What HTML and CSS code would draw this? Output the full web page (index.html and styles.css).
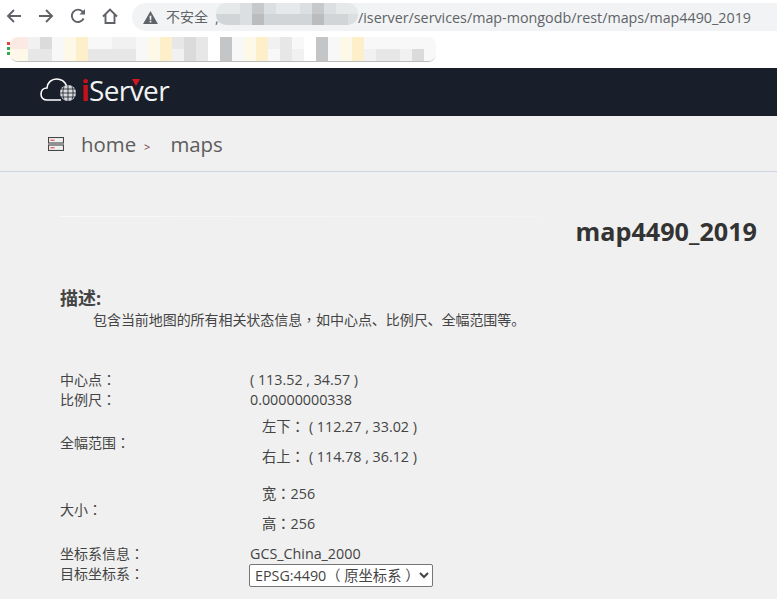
FILE: index.html
```html
<!DOCTYPE html>
<html lang="zh">
<head>
<meta charset="utf-8">
<title>map4490_2019</title>
<link rel="stylesheet" href="styles.css">
</head>
<body>
<div class="chrome">
  <div class="toolbar">
    <svg class="nav" viewBox="0 0 16 16"><path d="M15 8H2M8 2 2 8l6 6" /></svg>
    <svg class="nav" viewBox="0 0 16 16"><path d="M1 8h13M8 2l6 6-6 6" /></svg>
    <svg class="nav" viewBox="0 0 16 16"><path d="M13.6 10.5A6.2 6.2 0 1 1 12.6 3.6L14.5 5.4" /><path class="solid" d="M15 1v5.5H9.5z" /></svg>
    <svg class="nav" viewBox="0 0 16 16"><path d="M1 8.5 8 1.5l7 7M3.5 6.5V15h9V6.500" /></svg>
    <div class="url">
      <svg class="warn" viewBox="0 0 16 14"><path d="M8 0 16 14H0z" /><rect class="warnmark" x="7.100" y="5" width="1.800" height="4.500" /><rect class="warnmark" x="7.100" y="10.500" width="1.800" height="1.800" /></svg>
      <span class="insecure">不安全</span>
      <span class="sep">,</span>
      <div class="urlblur">
        <i class="u1"></i><i class="u1"></i><i class="u2"></i><i class="u4"></i><i class="u2"></i><i class="u1"></i><i class="u1"></i><i class="u2"></i><i class="u4"></i><i class="u2"></i><i class="u1"></i><i class="u1"></i>
        <i class="u3"></i><i class="u3"></i><i class="u2"></i><i class="u5"></i><i class="u3"></i><i class="u3"></i><i class="u3"></i><i class="u3"></i><i class="u5"></i><i class="u3"></i><i class="u3"></i><i class="u2"></i>
      </div>
      <span class="path">/iserver/services/map-mongodb/rest/maps/map4490_2019</span>
    </div>
  </div>
  <div class="bookmarks">
    <div class="dots"><i class="dot red"></i><i class="dot green"></i><i class="dot green"></i></div>
    <div class="blur">
      <i class="pi"></i><i class="pi"></i><i class="m2"></i><i class="m4"></i><i class="m1"></i><i class="m6"></i><i class="m7"></i><i class="m1"></i><i class="m1"></i><i class="m2"></i><i class="m2"></i><i class="m1"></i><i class="m6"></i><i class="m7"></i><i class="m3"></i><i class="m4"></i><i class="m3"></i><i class="m0"></i><i class="m5"></i><i class="m1"></i><i class="m6"></i><i class="m7"></i><i class="m2"></i><i class="m3"></i><i class="m1"></i><i class="m0"></i><i class="m5"></i><i class="m1"></i><i class="m6"></i><i class="m7"></i><i class="m1"></i><i class="m1"></i><i class="m1"></i><i class="m1"></i><i class="m1"></i><i class="m1"></i>
      <i class="m6"></i><i class="m6"></i><i class="m3"></i><i class="m3"></i><i class="m1"></i><i class="m6"></i><i class="m7"></i><i class="m3"></i><i class="m3"></i><i class="m3"></i><i class="m3"></i><i class="m1"></i><i class="m6"></i><i class="m7"></i><i class="m2"></i><i class="m4"></i><i class="m3"></i><i class="m0"></i><i class="m5"></i><i class="m1"></i><i class="m6"></i><i class="m7"></i><i class="m1"></i><i class="m3"></i><i class="m2"></i><i class="m0"></i><i class="m5"></i><i class="m1"></i><i class="m6"></i><i class="m7"></i><i class="m2"></i><i class="m3"></i><i class="m3"></i><i class="m2"></i><i class="m4"></i><i class="m1"></i>
    </div>
  </div>
</div>

<header class="brand">
  <svg class="cloud" viewBox="0 0 36 26">
    <path class="cloudline" d="M21 22H7C3.500 22 1 19.500 1 16C1 12.500 3.500 10 7 10C7.500 4.500 11.500 1 16.500 1C21.500 1 25 4 26.500 7.500" />
    <circle class="globe" cx="28" cy="15" r="8" />
    <path class="grid" d="M20 15h16M21 11h14M21 19h14M28 7v16M24 8.500c-1.500 4-1.500 9 0 13M32 8.500c1.500 4 1.500 9 0 13" />
  </svg>
  <div class="logotext"><span class="red-i">i</span>Server<b class="notch"></b></div>
</header>

<nav class="crumbs">
  <svg class="crumbicon" viewBox="0 0 16 14">
    <rect x="0.500" y="0.500" width="15" height="5.500" />
    <rect x="0.500" y="8" width="15" height="5.500" />
    <path d="M2.500 3.200h4M2.500 10.800h4" />
  </svg>
  <a class="crumb">home</a>
  <span class="gt">&gt;</span>
  <a class="crumb">maps</a>
</nav>

<main class="content">
  <div class="rule"></div>
  <h1 class="title">map4490_2019</h1>
  <h2 class="desc-head">描述:</h2>
  <p class="desc">包含当前地图的所有相关状态信息<span class="cp" lang="zh-Hant">，</span>如中心点、比例尺、全幅范围等。</p>
  <div class="props">
    <div class="label r1">中心点<span class="cp" lang="zh-Hant">：</span></div><div class="value r1">( 113.52 , 34.57 )</div>
    <div class="label r1">比例尺<span class="cp" lang="zh-Hant">：</span></div><div class="value r1">0.00000000338</div>
    <div class="label">全幅范围<span class="cp" lang="zh-Hant">：</span></div>
    <div class="value stack range"><div class="line">左下<span class="cp" lang="zh-Hant">：</span>( 112.27 , 33.02 )</div><div class="line">右上<span class="cp" lang="zh-Hant">：</span>( 114.78 , 36.12 )</div></div>
    <div class="label">大小<span class="cp" lang="zh-Hant">：</span></div>
    <div class="value stack size"><div class="line">宽<span class="cp" lang="zh-Hant">：</span>256</div><div class="line">高<span class="cp" lang="zh-Hant">：</span>256</div></div>
    <div class="label r1">坐标系信息<span class="cp" lang="zh-Hant">：</span></div><div class="value r1">GCS_China_2000</div>
    <div class="label r1">目标坐标系<span class="cp" lang="zh-Hant">：</span></div>
    <div class="value r1"><select class="crs"><option>EPSG:4490（ 原坐标系 ）</option></select></div>
  </div>
</main>
</body>
</html>
```
FILE: styles.css
```css
* { box-sizing: border-box; }
html, body { margin: 0; height: 599px; overflow: hidden; }
body {
  background: #f0f0f0;
  color: #444;
  font-family: "Open Sans", "Noto Sans CJK SC", sans-serif;
  font-size: 14px;
}
.cp { font-family: "Noto Sans CJK TC", sans-serif; line-height: 1; }

.chrome { height: 68px; background: #fff; }
.toolbar { display: flex; align-items: flex-start; height: 37px; padding: 3px 0 0 6px; }
.nav { width: 16px; height: 16px; margin: 5px 16px 0 0; flex: none; }
.nav path { fill: none; stroke: #5f6368; stroke-width: 1.900; }
.nav .solid { fill: #5f6368; stroke: none; }
.url {
  display: flex;
  align-items: center;
  height: 28px;
  flex: 1;
  margin-left: -2px;
  padding-left: 11px;
  background: #f1f3f4;
  border-radius: 14px 0 0 14px;
  color: #5f6368;
  font-size: 14.300px;
  white-space: nowrap;
}
.warn { width: 15px; height: 13px; flex: none; margin-right: 8px; }
.warn path { fill: #5f6368; }
.warnmark { fill: #f1f3f4; }
.insecure { font-size: 14px; line-height: 20px; }
.sep { margin-left: 7px; width: 1px; }
.urlblur {
  display: grid;
  grid-template-columns: repeat(12, 12px);
  grid-auto-rows: 11px;
  align-self: flex-start;
  width: 142px;
  border-radius: 10px;
  overflow: hidden;
}
.urlblur i { display: block; }
.u1 { background: #e6e9ea; }
.u2 { background: #dcdfe1; }
.u3 { background: #d2d5d7; }
.u4 { background: #c6c8ca; }
.u5 { background: #bbbcbe; }

.bookmarks { display: flex; height: 31px; padding-left: 7px; }
.dots { display: flex; flex-direction: column; gap: 2px; width: 3px; padding-top: 5px; }
.dot { display: block; width: 3px; height: 3px; }
.red { background: #e0453a; }
.green { background: #34a853; }
.blur {
  display: grid;
  grid-template-columns: 6px repeat(35, 12px);
  grid-auto-rows: 12px;
  align-self: flex-start;
  width: 426px;
  height: 25px;
  border-bottom: 1px solid #bcbcbc;
  border-radius: 8px;
  overflow: hidden;
}
.blur i { display: block; }
.pi { background: #fbeae4; }
.m0 { background: #fff; }
.m1 { background: #f8f8f8; }
.m2 { background: #f1f1f1; }
.m3 { background: #e7e7e7; }
.m4 { background: #dbdbdb; }
.m5 { background: #c4c5c7; }
.m6 { background: #fdf8e8; }
.m7 { background: #fcefc9; }

.brand {
  display: flex;
  align-items: center;
  height: 48px;
  padding: 0 0 2px 40px;
  background: #181f2a;
}
.cloud { width: 36px; height: 26px; flex: none; margin-right: 7px; }
.cloudline { fill: none; stroke: #fff; stroke-width: 1.600; }
.globe { fill: #d8dadd; }
.grid { fill: none; stroke: #181f2a; stroke-width: 0.800; }
.logotext {
  position: relative;
  margin: -2px 0 0 -2px;
  color: #f2f2f2;
  font-family: "Open Sans", sans-serif;
  font-size: 28px;
  line-height: 30px;
  letter-spacing: -0.600px;
}
.red-i { color: #c8101a; font-weight: 700; }
.notch {
  position: absolute;
  left: 51px;
  top: 4px;
  border: 4px solid transparent;
  border-top: 7px solid #d81820;
  border-bottom: 0;
}

.crumbs {
  display: flex;
  align-items: center;
  height: 56px;
  padding: 1px 0 0 48px;
  border-bottom: 1px solid #cdd5e2;
  color: #5c5c5c;
}
.crumbicon { width: 16px; height: 14px; margin-right: 17px; }
.crumbicon rect { fill: none; stroke: #444; stroke-width: 1.100; }
.crumbicon path { stroke: #d8343a; stroke-width: 1; }
.crumb { font-size: 20.400px; line-height: 30px; }
.gt { margin: 5px 20px 0 8px; font-size: 11px; color: #6b3a3a; }

.content { padding: 0 20px 0 60px; }
.rule {
  width: 480px;
  height: 1px;
  margin-top: 44px;
  background: linear-gradient(90deg, #f6f8fb, #f2f3f5);
}
.title {
  height: 31px;
  margin: 0;
  text-align: right;
  font-size: 25.200px;
  line-height: 28px;
  font-weight: 700;
  color: #333;
}
.desc-head { margin: 37px 0 0; font-size: 18px; line-height: 26px; font-weight: 700; color: #444; }
.desc { margin: 0; padding-left: 33px; line-height: 18px; white-space: nowrap; font-size: 14px; letter-spacing: -0.060px; }

.props {
  display: grid;
  grid-template-columns: 190px 1fr;
  align-items: center;
  margin-top: 41px;
  line-height: 20px;
}
.value { font-size: 14.300px; }
.stack { display: flex; flex-direction: column; padding-left: 12px; }
.line { height: 20px; }
.range { gap: 10px; margin: 7px 0 9px; }
.range .cp { margin-right: 4px; }
.size { gap: 10px; margin: 8px 0 10px; }
.r1 { height: 20px; }
.crs {
  display: block;
  width: 184px;
  height: 23px;
  margin-left: -1px;
  padding: 0 0 0 1px;
  background: #fff;
  border: 1px solid #767676;
  border-radius: 2px;
  color: #444;
  font-family: "Open Sans", "Noto Sans CJK SC", sans-serif;
  font-size: 14.300px;
}
```
